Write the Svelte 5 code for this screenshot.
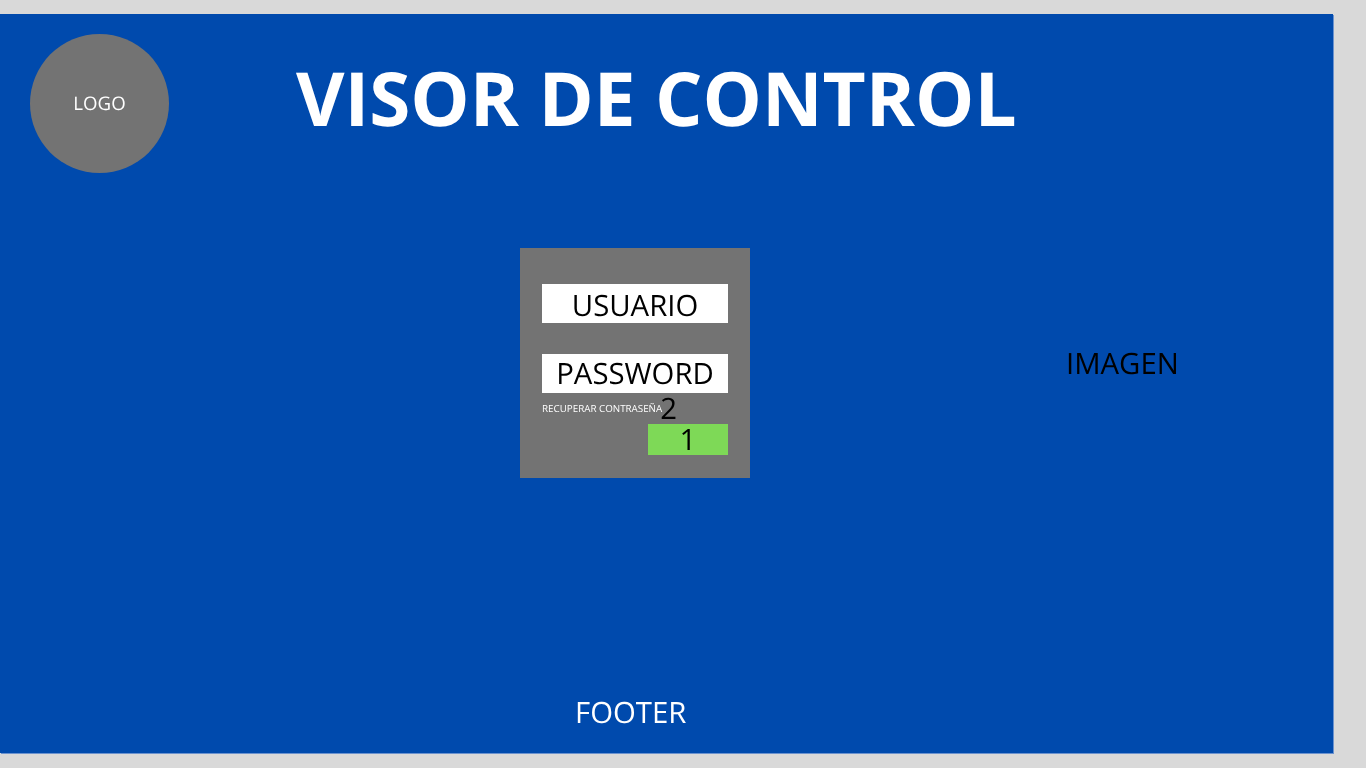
<script>
  const title = 'VISOR DE CONTROL';
</script>

<div class="page">
  <div class="frame">
    <header class="top">
      <div class="logo">LOGO</div>
      <h1>{title}</h1>
    </header>

    <main class="middle">
      <form class="login">
        <div class="field first">USUARIO</div>
        <div class="field second">PASSWORD</div>
        <div class="recover">
          <span class="recover-link">RECUPERAR CONTRASEÑA</span>
          <span class="num">2</span>
        </div>
        <div class="submit-row">
          <div class="submit">1</div>
        </div>
      </form>
      <div class="image">IMAGEN</div>
    </main>

    <footer class="foot">FOOTER</footer>
  </div>
</div>

<style>
  :global(body) {
    margin: 0;
    background: #d9d9d9;
  }
  .page {
    width: 1366px;
    height: 768px;
    padding-top: 14px;
    box-sizing: border-box;
    font-family: "Open Sans", sans-serif;
    text-rendering: geometricPrecision;
    overflow: hidden;
    will-change: transform;
  }
  .frame {
    width: 1333px;
    height: 739px;
    background: #004aad;
    box-shadow: 1px 1px 0 #6c93cf;
    display: flex;
    flex-direction: column;
  }
  .top {
    display: flex;
    height: 234px;
    padding: 20px 0 0 30px;
    box-sizing: border-box;
  }
  .logo {
    width: 139px;
    height: 139px;
    border-radius: 50%;
    background: #737373;
    color: #fff;
    font-size: 18.67px;
    line-height: 139px;
    text-align: center;
  }
  h1 {
    margin: 0 0 0 127px;
    font-size: 74.67px;
    line-height: 102px;
    font-weight: 700;
    color: #fff;
    white-space: nowrap;
    height: 102px;
    padding-top: 12px;
  }
  .middle {
    display: flex;
    height: 230px;
    padding-left: 520px;
  }
  .login {
    width: 230px;
    height: 230px;
    background: #737373;
    padding: 36px 22px 0;
    box-sizing: border-box;
    display: flex;
    flex-direction: column;
  }
  .field {
    width: 186px;
    height: 39px;
    background: #fff;
    color: #000;
    font-size: 29.33px;
    line-height: 43px;
    text-align: center;
  }
  .second {
    margin-top: 31px;
    line-height: 39px;
  }
  .recover {
    display: flex;
    align-items: center;
    height: 31px;
  }
  .recover-link {
    color: #fff;
    font-size: 9.8px;
    white-space: nowrap;
  }
  .num {
    font-size: 29.33px;
    line-height: 30px;
    color: #000;
    margin-left: -2px;
    margin-bottom: 1px;
  }
  .submit-row {
    display: flex;
    justify-content: flex-end;
  }
  .submit {
    width: 80px;
    height: 31px;
    background: #7ed957;
    color: #000;
    font-size: 29.33px;
    line-height: 30px;
    text-align: center;
  }
  .image {
    margin: 96px 0 0 316px;
    font-size: 29.33px;
    line-height: 38px;
    color: #000;
  }
  .foot {
    margin: 215px 0 0 575px;
    font-size: 29.33px;
    line-height: 38px;
    color: #fff;
  }
</style>
